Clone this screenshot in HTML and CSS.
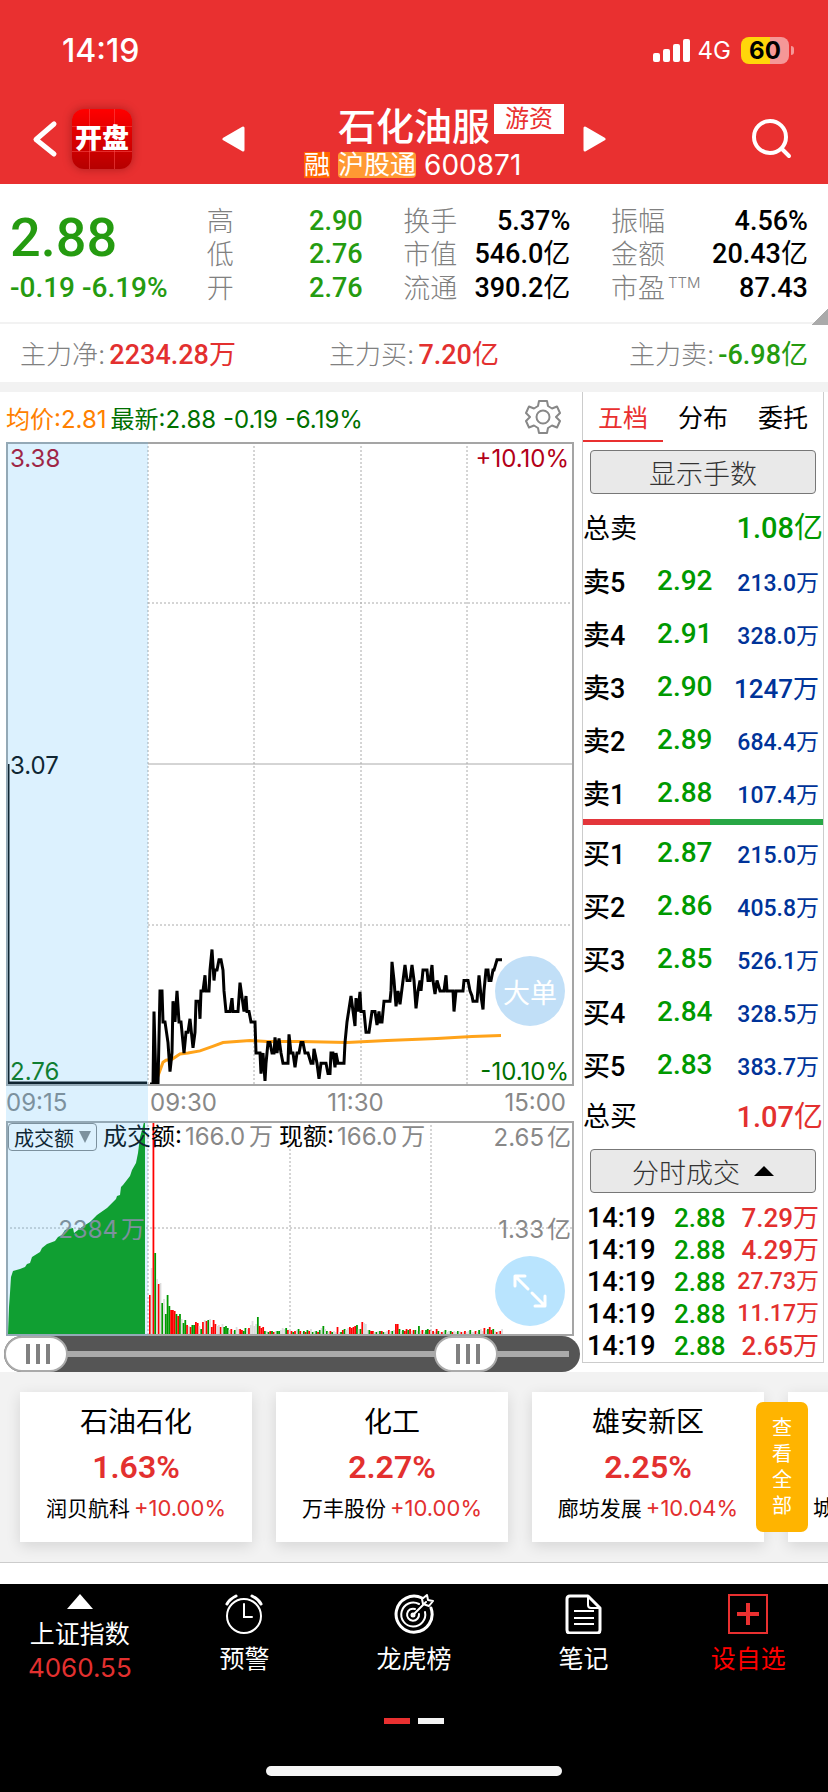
FILE: index.html
```html
<!DOCTYPE html>
<html lang="zh-CN">
<head>
    <title>石化油服 600871</title>
    <meta charset="UTF-8">
    <meta name="viewport" content="width=device-width, initial-scale=1">
    <link rel="stylesheet" href="styles.css">
</head>
<body>
    <header class="header">
        <div class="status-bar">
            <span class="clock">14:19</span>
            <div class="status-icons">
                <svg class="signal" viewBox="0 0 37 23" width="37" height="23" fill="#fff">
                    <rect x="0" y="14" width="7" height="9" rx="2"/>
                    <rect x="10" y="10" width="7" height="13" rx="2"/>
                    <rect x="20" y="5" width="7" height="18" rx="2"/>
                    <rect x="30" y="0" width="7" height="23" rx="2"/>
                </svg>
                <span class="network">4G</span>
                <span class="battery">60</span>
                <span class="battery-tip"></span>
            </div>
        </div>
        <div class="nav">
            <div class="nav-left">
                <button class="icon-btn" aria-label="返回">
                    <svg viewBox="0 0 26 38" width="26" height="38" fill="none" stroke="#fff" stroke-width="5" stroke-linecap="round" stroke-linejoin="round"><path d="M22 4 4 19.500 22 34"/></svg>
                </button>
                <a class="logo" href="#">开盘</a>
            </div>
            <button class="icon-btn" aria-label="上一只">
                <svg viewBox="0 0 24 26" width="24" height="26" fill="#fff" stroke="#fff" stroke-width="3" stroke-linejoin="round"><path d="M22 2v22L3 13z"/></svg>
            </button>
            <div class="title">
                <div class="title-main">
                    <h1>石化油服</h1>
                    <span class="tag">游资</span>
                </div>
                <div class="title-sub">
                    <span class="mark">融</span>
                    <span class="mark mark-hk">沪股通</span>
                    <span class="code">600871</span>
                </div>
            </div>
            <button class="icon-btn" aria-label="下一只">
                <svg viewBox="0 0 24 26" width="24" height="26" fill="#fff" stroke="#fff" stroke-width="3" stroke-linejoin="round"><path d="M2 2v22l19-11z"/></svg>
            </button>
            <div class="nav-right">
                <button class="icon-btn" aria-label="搜索">
                    <svg viewBox="0 0 40 40" width="40" height="40" fill="none" stroke="#fff" stroke-width="4" stroke-linecap="round"><circle cx="18" cy="18" r="16"/><path d="m30 30 7 7"/></svg>
                </button>
            </div>
        </div>
    </header>

    <section class="quote">
        <div class="quote-price">
            <strong>2.88</strong>
            <span>-0.19 -6.19%</span>
        </div>
        <dl class="stats down">
            <dt>高</dt><dd>2.90</dd>
            <dt>低</dt><dd>2.76</dd>
            <dt>开</dt><dd>2.76</dd>
        </dl>
        <dl class="stats">
            <dt>换手</dt><dd>5.37%</dd>
            <dt>市值</dt><dd>546.0<span class="unit">亿</span></dd>
            <dt>流通</dt><dd>390.2<span class="unit">亿</span></dd>
        </dl>
        <dl class="stats">
            <dt>振幅</dt><dd>4.56%</dd>
            <dt>金额</dt><dd>20.43<span class="unit">亿</span></dd>
            <dt>市盈<sup>TTM</sup></dt><dd>87.43</dd>
        </dl>
        <span class="corner"></span>
    </section>

    <section class="flow">
        <div>主力净:<b class="up">2234.28<span class="unit">万</span></b></div>
        <div>主力买:<b class="up">7.20<span class="unit">亿</span></b></div>
        <div>主力卖:<b class="down">-6.98<span class="unit">亿</span></b></div>
    </section>

    <main class="main">
        <div class="chart-col">
            <div class="chart-info">
                <span class="avg">均价:2.81</span>
                <span class="last">最新:2.88 -0.19 -6.19%</span>
                <button class="icon-btn gear" aria-label="设置">
                    <svg viewBox="0 0 36 36" width="36" height="36" fill="none" stroke="#888" stroke-width="2" stroke-linejoin="round">
                        <circle cx="18" cy="18" r="6.500"/>
                        <path d="M14 2h8l1 5 4 2.500 5-2 3 6.500-4 4 4 4-3 6.500-5-2-4 2.500-1 5h-8l-1-5-4-2.500-5 2L1 22l4-4-4-4 3-6.500 5 2L13 7z"/>
                    </svg>
                </button>
            </div>
            <div class="charts">
                <svg class="chart" viewBox="0 0 568 644">
                    <g class="grid">
                        <path d="M142 0v644M248 0v644M355 0v644M461 0v644M142 161h426M142 483h426"/>
                    </g>
                    <path class="mid" d="M142 322h426"/>
                    <polyline id="avgLine" class="avg-line"/>
                    <polyline id="priceLine" class="price-line"/>
                    <path class="pre-line" d="M2 322v319h139"/>
                    <rect class="frame" x="1" y="1" width="566" height="642"/>
                    <text class="t-up" x="4" y="25">3.38</text>
                    <text class="t-up" x="563" y="25" text-anchor="end">+10.10%</text>
                    <text x="4" y="332">3.07</text>
                    <text class="t-down" x="4" y="638">2.76</text>
                    <text class="t-down" x="563" y="638" text-anchor="end">-10.10%</text>
                </svg>
                <div class="times">
                    <span>09:15</span><span>09:30</span><span>11:30</span><span>15:00</span>
                </div>
                <svg class="chart" viewBox="0 0 568 215">
                    <g class="grid">
                        <path d="M142 0v215M284 0v215M425 0v215M0 107h568"/>
                    </g>
                    <polygon class="pre-volume" points="2,213 3,186 4,172 5,156 7,150 14,148 19,146 21,143 24,142 26,136 34,131 36,127 41,123 49,120 52,116 56,114 59,109 67,107 68,112 72,109 76,106 84,101 91,94 101,87 110,78 111,75 114,74 115,66 117,64 124,55 126,49 130,42 132,32 134,16 136,9 138,1 139,1 139,213"/>
                    <g id="volumes"></g>
                    <rect class="frame" x="1" y="1" width="566" height="213"/>
                    <text x="97" y="24">成交额:<tspan class="t-gray" dx="3">166.0</tspan><tspan class="t-gray" dx="4">万</tspan><tspan dx="6">现额:</tspan><tspan class="t-gray" dx="3">166.0</tspan><tspan class="t-gray" dx="4">万</tspan></text>
                    <text class="t-gray" x="565" y="25" text-anchor="end">2.65<tspan dx="3">亿</tspan></text>
                    <text class="t-gray" x="565" y="117" text-anchor="end">1.33<tspan dx="3">亿</tspan></text>
                    <text class="t-gray" x="139" y="117" text-anchor="end">2384<tspan dx="3">万</tspan></text>
                </svg>
                <button class="metric">成交额<i></i></button>
                <div class="pre-open"></div>
                <button class="float-btn big-order">大单</button>
                <button class="float-btn expand" aria-label="全屏">
                    <svg viewBox="0 0 34 34" width="34" height="34" fill="none" stroke="#fff" stroke-width="3" stroke-linecap="round" stroke-linejoin="round"><path d="M2 12V2h10M3 3l12 12M32 22v10H22M31 31 19 19"/></svg>
                </button>
            </div>
            <div class="slider">
                <div class="track"></div>
                <input type="range" min="0" max="100" value="0" aria-label="开始时间">
                <input type="range" min="0" max="100" value="84" aria-label="结束时间">
            </div>
        </div>

        <aside class="book">
            <nav class="tabs">
                <button class="active">五档</button>
                <button>分布</button>
                <button>委托</button>
            </nav>
            <button class="gray-btn">显示手数</button>
            <div class="total"><span>总卖</span><b>1.08<span class="unit">亿</span></b></div>
            <table class="levels">
                <tr><th>卖5</th><td>2.92</td><td>213.0<span class="unit">万</span></td></tr>
                <tr><th>卖4</th><td>2.91</td><td>328.0<span class="unit">万</span></td></tr>
                <tr><th>卖3</th><td>2.90</td><td class="short">1247<span class="unit">万</span></td></tr>
                <tr><th>卖2</th><td>2.89</td><td>684.4<span class="unit">万</span></td></tr>
                <tr><th>卖1</th><td>2.88</td><td>107.4<span class="unit">万</span></td></tr>
            </table>
            <div class="ratio"></div>
            <table class="levels">
                <tr><th>买1</th><td>2.87</td><td>215.0<span class="unit">万</span></td></tr>
                <tr><th>买2</th><td>2.86</td><td>405.8<span class="unit">万</span></td></tr>
                <tr><th>买3</th><td>2.85</td><td>526.1<span class="unit">万</span></td></tr>
                <tr><th>买4</th><td>2.84</td><td>328.5<span class="unit">万</span></td></tr>
                <tr><th>买5</th><td>2.83</td><td>383.7<span class="unit">万</span></td></tr>
            </table>
            <div class="total buy"><span>总买</span><b>1.07<span class="unit">亿</span></b></div>
            <button class="gray-btn">分时成交<svg viewBox="0 0 20 10" width="20" height="10"><path d="M10 0 20 10H0z"/></svg></button>
            <table class="ticks">
                <tr><td>14:19</td><td>2.88</td><td>7.29<span class="unit">万</span></td></tr>
                <tr><td>14:19</td><td>2.88</td><td>4.29<span class="unit">万</span></td></tr>
                <tr><td>14:19</td><td>2.88</td><td class="long">27.73<span class="unit">万</span></td></tr>
                <tr><td>14:19</td><td>2.88</td><td class="long">11.17<span class="unit">万</span></td></tr>
                <tr><td>14:19</td><td>2.88</td><td>2.65<span class="unit">万</span></td></tr>
            </table>
        </aside>
    </main>

    <section class="sectors">
        <a class="card" href="#">
            <h2>石油石化</h2>
            <strong>1.63%</strong>
            <p>润贝航科<span>+10.00%</span></p>
        </a>
        <a class="card" href="#">
            <h2>化工</h2>
            <strong>2.27%</strong>
            <p>万丰股份<span>+10.00%</span></p>
        </a>
        <a class="card" href="#">
            <h2>雄安新区</h2>
            <strong>2.25%</strong>
            <p>廊坊发展<span>+10.04%</span></p>
        </a>
        <a class="card card-next" href="#">
            <p>城</p>
        </a>
        <button class="view-all">查看全部</button>
    </section>

    <footer class="footer">
        <nav class="toolbar">
            <a class="index" href="#">
                <svg viewBox="0 0 26 15" width="26" height="15"><path d="M13 0 26 15H0z" fill="#fff"/></svg>
                <span>上证指数</span>
                <em>4060.55</em>
            </a>
            <a href="#">
                <svg viewBox="0 0 40 40" width="40" height="40" fill="none" stroke="#fff" stroke-width="2" stroke-linecap="round"><circle cx="20" cy="22" r="17"/><path d="M20 10v13h8"/><path d="M3 10C5 6 8 4 12 2M37 10C35 6 32 4 28 2" stroke-width="3"/></svg>
                <span>预警</span>
            </a>
            <a href="#">
                <svg viewBox="0 0 40 40" width="40" height="40" fill="none" stroke="#fff" stroke-width="2" stroke-linecap="round" stroke-linejoin="round"><path d="M28 4A18 18 0 1 0 37 14" stroke-width="3"/><path d="M25 10a12 12 0 1 0 6 8"/><path d="M21 15a6 6 0 1 0 4 5"/><path d="m18 22 14-14M29 10l-1-5 5-4 1 5 5 1-4 5z"/><circle cx="19" cy="21" r="1.500"/></svg>
                <span>龙虎榜</span>
            </a>
            <a href="#">
                <svg viewBox="0 0 40 40" width="40" height="40" fill="none" stroke="#fff" stroke-width="3" stroke-linejoin="round"><path d="M6 2h18l12 12v22q0 3-3 3H6q-3 0-3-3V5q0-3 3-3z"/><path d="M24 3v8q0 3 3 3h8" stroke-width="2"/><path d="M10 17h20M10 24h20M10 30h20" stroke-width="2"/></svg>
                <span>笔记</span>
            </a>
            <a class="add" href="#">
                <svg viewBox="0 0 40 40" width="40" height="40" fill="none" stroke="#e93030"><path d="M1 1h38v38H1z" stroke-width="2"/><path d="M20 9v22M9 20h22" stroke-width="4"/></svg>
                <span>设自选</span>
            </a>
        </nav>
        <div class="pager"><i class="on"></i><i></i></div>
        <div class="home-bar"></div>
    </footer>
    <script src="chart.js"></script>
</body>
</html>
```

FILE: styles.css
```css
* {
    box-sizing: border-box;
}
body {
    margin: 0;
    font-family: Inter, "Noto Sans CJK SC", sans-serif;
    font-size: 24px;
    color: #000;
    background: #fff;
    overflow-x: hidden;
}
button {
    margin: 0;
    padding: 0;
    border: none;
    background: none;
    color: inherit;
    font: inherit;
    cursor: pointer;
}
a {
    color: inherit;
    text-decoration: none;
}
svg {
    display: block;
}
table {
    border-collapse: collapse;
}
h1, h2, p, dl, dd {
    margin: 0;
}
.up {
    color: #e3302f;
}
.down {
    color: #259b10;
}
.unit {
    font-weight: 400;
}
.icon-btn {
    display: flex;
}

/* header */
.header {
    background: #e93030;
    color: #fff;
    height: 184px;
}
.status-bar {
    display: flex;
    justify-content: space-between;
    align-items: center;
    height: 100px;
    padding: 0 34px 0 62px;
}
.clock {
    font-size: 32px;
    font-weight: 500;
}
.status-icons {
    display: flex;
    align-items: center;
}
.network {
    margin: 0 10px 0 8px;
}
.battery {
    width: 48px;
    line-height: 27px;
    border-radius: 8px;
    background: linear-gradient(90deg, #ffd60a 60%, #f59797 60%);
    color: #000;
    font-weight: 700;
    text-align: center;
}
.battery-tip {
    width: 3px;
    height: 9px;
    margin-left: 2px;
    border-radius: 0 4px 4px 0;
    background: #f59797;
}
.nav {
    display: grid;
    grid-template-columns: 1fr auto 300px auto 1fr;
    align-items: center;
    column-gap: 19px;
    height: 78px;
}
.nav-left {
    display: flex;
    align-items: center;
    gap: 14px;
    padding-left: 32px;
}
.nav-right {
    display: flex;
    justify-content: flex-end;
    padding-right: 36px;
}
.logo {
    width: 60px;
    height: 60px;
    border-radius: 12px;
    background:
        linear-gradient(90deg, transparent 17px, #ff555580 17px, #ff555580 18px, transparent 18px, transparent 42px, #ff555580 42px, #ff555580 43px, transparent 43px),
        linear-gradient(transparent 17px, #ff555580 17px, #ff555580 18px, transparent 18px, transparent 42px, #ff555580 42px, #ff555580 43px, transparent 43px),
        linear-gradient(#ff0000, #b50000);
    box-shadow: 0 0 10px rgba(80, 0, 0, 0.4);
    font-size: 27px;
    font-weight: 900;
    line-height: 60px;
    text-align: center;
}
.title {
    padding-top: 4px;
}
.title-main {
    display: flex;
    justify-content: flex-end;
    gap: 4px;
}
.title-main h1 {
    font-size: 38px;
    font-weight: 500;
    line-height: 44px;
}
.tag {
    width: 70px;
    height: 30px;
    background: #fff;
    color: #e93030;
    line-height: 30px;
    text-align: center;
}
.title-sub {
    display: flex;
    align-items: center;
    gap: 8px;
    margin-top: 4px;
    padding-left: 40px;
    font-size: 26px;
    line-height: 26px;
}
.code {
    font-size: 28px;
}
.mark {
    background: #ff6600;
}
.mark-hk {
    border-radius: 4px;
    background: #ff9933;
}

/* quote */
.quote {
    position: relative;
    display: grid;
    grid-template-columns: 156px 156px 167px 197px;
    justify-content: space-between;
    padding: 21px 20px 17px 10px;
    border-bottom: 2px solid #f2f2f2;
}
.quote-price {
    color: #259b10;
    font-family: Roboto, sans-serif;
    font-size: 28px;
    font-weight: 500;
    line-height: 34px;
    white-space: nowrap;
}
.quote-price strong {
    display: block;
    font-size: 54px;
    font-weight: 500;
    line-height: 66px;
}
.stats {
    display: grid;
    grid-template-columns: auto 1fr;
    font-size: 27px;
    line-height: 33px;
}
.stats dt {
    height: 33px;
    color: #808080;
    font-weight: 300;
}
.stats sup {
    font-size: 15px;
    line-height: 15px;
    margin-left: 3px;
}
.stats dd {
    font-family: Roboto, "Noto Sans CJK SC", sans-serif;
    font-weight: 500;
    text-align: right;
    white-space: nowrap;
}
.corner {
    position: absolute;
    right: 0;
    bottom: -3px;
    width: 16px;
    height: 16px;
    background: linear-gradient(135deg, transparent 50%, #aaa 50%);
}
.flow {
    display: grid;
    grid-template-columns: 1fr auto 1fr;
    padding: 4px 20px 0;
    border-bottom: 10px solid #f2f2f2;
    color: #808080;
    font-size: 26px;
    font-weight: 300;
    line-height: 54px;
}
.flow div:last-child {
    text-align: right;
}
.flow b {
    margin-left: 4px;
    font-family: Roboto, "Noto Sans CJK SC", sans-serif;
    font-size: 27px;
    font-weight: 500;
}

/* charts */
.main {
    display: grid;
    grid-template-columns: minmax(0, 1fr) 242px;
    gap: 2px;
    padding-right: 4px;
}
.chart-info {
    display: flex;
    align-items: center;
    gap: 4px;
    height: 50px;
    padding-left: 6px;
}
.avg {
    color: #ff8000;
}
.last {
    color: #007000;
}
.gear {
    margin-left: auto;
    margin-right: 19px;
}
.charts {
    position: relative;
    margin: 0 6px;
}
.chart {
    width: 100%;
    height: auto;
    font-size: 24px;
}
.grid {
    fill: none;
    stroke: #aaa;
    stroke-width: 1;
    stroke-dasharray: 2 2;
}
.mid {
    stroke: #aaa;
}
.frame {
    fill: none;
    stroke: #a5a5a5;
    stroke-width: 2;
}
.price-line, .pre-line {
    fill: none;
    stroke: #000;
    stroke-width: 3;
}
.avg-line {
    fill: none;
    stroke: #ffa31a;
    stroke-width: 3;
}
.pre-volume {
    fill: #009900;
}
.t-up {
    fill: #b30018;
}
.t-down {
    fill: #007000;
}
.t-gray {
    fill: #888;
}
.times {
    display: grid;
    grid-template-columns: 144px 1fr 1fr 1fr;
    height: 35px;
    line-height: 34px;
    color: #888;
}
.times span:nth-child(3) {
    padding-left: 36px;
}
.times span:last-child {
    text-align: right;
    padding-right: 8px;
}
.metric {
    position: absolute;
    left: 2px;
    bottom: 185px;
    display: flex;
    align-items: center;
    gap: 5px;
    height: 28px;
    padding: 0 5px;
    border: 1px solid #888;
    border-radius: 4px;
    font-size: 20px;
}
.metric i {
    border: 6px solid transparent;
    border-top: 12px solid #888;
    border-bottom: 0;
}
/* 竞价时段遮罩 */
.pre-open {
    position: absolute;
    inset: 0 75% 0 0;
    background: rgba(78, 186, 250, 0.2);
    pointer-events: none;
}
.float-btn {
    position: absolute;
    right: 9px;
    display: flex;
    align-items: center;
    justify-content: center;
    width: 70px;
    height: 70px;
    border-radius: 50%;
    color: #fff;
    font-size: 27px;
}
.big-order {
    bottom: 310px;
    background: #c1dff7;
}
.expand {
    bottom: 10px;
    background: #b9e4fe;
}
.slider {
    position: relative;
    height: 36px;
    margin-left: 4px;
    border-radius: 18px;
    background: #555;
}
.track {
    position: absolute;
    inset: 15px 11px 15px 30px;
    background: #aaa;
}
.slider input {
    appearance: none;
    position: absolute;
    inset: 0;
    width: 100%;
    height: 36px;
    margin: 0;
    background: none;
    pointer-events: none;
}
.slider input::-webkit-slider-thumb {
    appearance: none;
    width: 64px;
    height: 36px;
    border: 2px solid #aaa;
    border-radius: 18px;
    background:
        linear-gradient(#808080, #808080) 20px 6px / 4px 20px no-repeat,
        linear-gradient(#808080, #808080) 30px 6px / 4px 20px no-repeat,
        linear-gradient(#808080, #808080) 40px 6px / 4px 20px no-repeat,
        #fff;
    pointer-events: auto;
}

/* order book */
.book {
    height: 971px;
    border: 1px solid #ccc;
    border-top: none;
}
.tabs {
    display: grid;
    grid-template-columns: repeat(3, 1fr);
    height: 50px;
}
.tabs button {
    border-bottom: 2px solid transparent;
    font-size: 25px;
}
.tabs .active {
    border-color: #e93030;
    color: #e93030;
}
.gray-btn {
    display: flex;
    align-items: center;
    justify-content: center;
    gap: 14px;
    width: calc(100% - 14px);
    height: 44px;
    margin: 8px 7px 0;
    border: 1px solid #777;
    border-radius: 4px;
    background: #e9e9e9;
    color: #333;
    font-size: 27px;
    font-weight: 300;
}
.total {
    display: flex;
    justify-content: space-between;
    height: 60px;
    padding-top: 8px;
    font-size: 27px;
    line-height: 53px;
}
.total b {
    color: #009900;
    font-family: Roboto, "Noto Sans CJK SC", sans-serif;
    font-size: 29px;
    font-weight: 500;
}
.total.buy {
    height: 50px;
    padding: 2px 0 0;
    line-height: 48px;
}
.total.buy b {
    color: #e3302f;
}
.levels, .ticks {
    width: 100%;
    font-family: Roboto, "Noto Sans CJK SC", sans-serif;
    font-weight: 500;
}
.levels tr {
    height: 53px;
}
.levels th, .levels td, .ticks td {
    padding: 0;
    text-align: left;
    white-space: nowrap;
}
.levels th {
    width: 74px;
    font-size: 27px;
    font-weight: 500;
}
.levels td {
    color: #009900;
    font-size: 28px;
}
.levels td:last-child {
    padding-right: 4px;
    color: #003399;
    font-size: 23px;
    text-align: right;
}
.levels .short:last-child {
    font-size: 26px;
}
.ratio {
    height: 6px;
    background: linear-gradient(90deg, #e3363b 53%, #28a745 53%);
}
.ratio + .levels {
    margin-top: 1px;
}
.ticks {
    margin-top: 9px;
    font-size: 27px;
    line-height: 32px;
}
.ticks td:first-child {
    width: 91px;
    padding-left: 4px;
}
.ticks td:nth-child(2) {
    color: #009900;
    font-size: 26px;
}
.ticks td:last-child {
    padding-right: 4px;
    color: #e3302f;
    font-size: 26px;
    text-align: right;
}
.ticks .long:last-child {
    font-size: 23px;
}

/* sectors */
.sectors {
    position: relative;
    display: flex;
    gap: 24px;
    padding: 20px;
    border-bottom: 1px solid #ccc;
    background: #f2f2f2;
    overflow: hidden;
}
.card {
    flex: 0 0 232px;
    height: 150px;
    padding-top: 10px;
    background: #fff;
    box-shadow: 0 4px 14px rgba(0, 0, 0, 0.12);
    text-align: center;
}
.card h2 {
    font-size: 28px;
    font-weight: 400;
    line-height: 40px;
}
.card strong {
    display: block;
    color: #e3302f;
    font-family: Roboto, sans-serif;
    font-size: 32px;
    font-weight: 600;
    line-height: 50px;
}
.card p {
    font-size: 21px;
    line-height: 32px;
    white-space: nowrap;
}
.card p span {
    margin-left: 4px;
    color: #e3302f;
    font-size: 22px;
}
.card-next {
    padding: 100px 0 0 25px;
    text-align: left;
}
.view-all {
    position: absolute;
    top: 30px;
    right: 20px;
    width: 52px;
    height: 130px;
    padding: 0 16px;
    border-radius: 7px;
    background: #ffb400;
    color: #fff;
    font-size: 20px;
    line-height: 26px;
}

/* footer */
.footer {
    height: 208px;
    margin-top: 21px;
    background: #000;
    color: #fff;
}
.toolbar {
    display: grid;
    grid-template-columns: 16fr 17fr 17fr 17fr 16fr;
    height: 134px;
    padding-top: 10px;
}
.toolbar a {
    display: flex;
    flex-direction: column;
    align-items: center;
    gap: 8px;
    font-size: 25px;
    line-height: 34px;
}
.toolbar .index {
    gap: 0;
}
.index svg {
    margin-bottom: 8px;
}
.index em {
    color: #e3302f;
    font-size: 26px;
    font-style: normal;
}
.toolbar .add {
    color: #ff0000;
}
.pager {
    display: flex;
    justify-content: center;
    gap: 8px;
}
.pager i {
    width: 26px;
    height: 6px;
    background: #f3f3f3;
}
.pager .on {
    background: #e93030;
}
.home-bar {
    width: 296px;
    height: 10px;
    margin: 42px auto 0;
    border-radius: 5px;
    background: #f5f5f5;
}
```

FILE: chart.js
```javascript
// 分时价格: [x, 相对跌停价的价位]
const prices = [
    [144, 0], [147, 0], [148, 7], [150, 0], [152, 0], [154, 9], [156, 9], [157, 6], [159, 6], [162, 4],
    [164, 1.2], [166, 3], [167, 8], [169, 6], [171, 9], [173, 6], [175, 6], [178, 3], [180, 5], [182, 5],
    [184, 6.3], [187, 3.5], [189, 5], [190, 8], [193, 8], [194, 6.3], [195, 9], [197, 9], [199, 10.5], [200, 9],
    [203, 9], [204, 11], [206, 13], [208, 10], [209, 11], [211, 11], [213, 12], [215, 12], [217, 11], [218, 9],
    [220, 7], [224, 7], [226, 8.3], [227, 7], [232, 7], [234, 9.8], [238, 7], [240, 8.5], [241, 7], [243, 7],
    [245, 6], [249, 6], [250, 3], [254, 3], [255, 1], [257, 3], [259, 0.3], [260, 2], [262, 4], [264, 4],
    [266, 3], [268, 3], [269, 4.5], [271, 3], [273, 4.4], [275, 3], [277, 2], [282, 2], [283, 4.8], [285, 3],
    [287, 3], [289, 1.6], [291, 3], [293, 3], [295, 4], [297, 4], [299, 3], [302, 3], [305, 2], [307, 2],
    [308, 3.4], [311, 2], [313, 0.5], [315, 2], [320, 2], [322, 1], [324, 1], [325, 3], [327, 3], [329, 1.6],
    [330, 3], [332, 2], [338, 2], [339, 4], [341, 6], [345, 8.5], [349, 5.6], [350, 8.3], [352, 7], [354, 8.9],
    [355, 7], [358, 7], [360, 5], [363, 5], [366, 7], [369, 7], [371, 5.7], [373, 7], [374, 6], [376, 6],
    [378, 8], [384, 8], [385, 9], [386, 11.8], [388, 10], [390, 7.5], [392, 9], [394, 7.7], [399, 11.5], [401, 10],
    [404, 10], [406, 11.5], [408, 10], [410, 7.3], [412, 9], [414, 10], [415, 9], [417, 11], [421, 11], [422, 10],
    [424, 10], [426, 11.5], [427, 10], [429, 8.7], [431, 10], [434, 9], [438, 9], [440, 10.5], [441, 9], [447, 9],
    [448, 7], [450, 9], [457, 9], [458, 10], [462, 10], [464, 9], [466, 8.5], [467, 8], [471, 8], [473, 10.5],
    [475, 8.5], [477, 7.2], [478, 9], [480, 11], [482, 11], [483, 10], [485, 10], [487, 11], [488, 11], [491, 12],
    [496, 12]
];

// 均价线
const averages = [
    [149, 0], [154, 1.3], [157, 2.1], [160, 2.3], [166, 2.4], [174, 2.9], [182, 3], [194, 3.2], [206, 3.6],
    [217, 4], [244, 4.2], [261, 4.1], [294, 4.1], [341, 4], [381, 4.2], [431, 4.4], [466, 4.6], [495, 4.7]
];

// 每分钟成交额: r 涨, g 跌, w 平
const volumes = 'r39 w66 r212 g81 w55 r50 w51 g31 w35 g20 g39 g28 r24 r24 r23 g20 r18 g20 w15 g11 g14 ' +
    'r9 w8 r7 g9 g9 r12 r11 w8 g5 r12 w14 r13 g14 w15 r7 r14 r10 w8 w9 r7 w10 g7 g8 g6 w4 r5 w3 g4 w7 w5 ' +
    'r5 r4 g3 g6 w5 r6 w9 w13 w8 w10 g17 r8 r6 r7 g3 w3 g2 r3 g3 r2 w3 g3 g3 w4 w6 w5 g6 r4 w5 r3 g2 r3 ' +
    'w4 g5 r3 w2 g3 r2 g4 r3 w5 g2 w3 g3 r2 g4 w6 g8 w5 g3 w2 r3 g2 w3 w2 r7 w2 g2 r4 g5 w4 w6 r7 r6 ' +
    'r7 r8 g9 w5 g5 r12 w11 w10 w4 g4 r3 r3 w2 g2 w3 g3 r3 g2 w2 w3 r4 w3 g3 w4 r10 r10 g5 w3 g4 r3 r5 ' +
    'g4 r5 w3 r4 g4 w3 g8 w3 r4 w2 g4 g5 r4 w3 r3 w2 r5 g3 w2 r2 w3 g4 w2 w3 g3 r2 w3 w2 g3 w3 r2 w2 ' +
    'r3 w2 w3 g4 w2 w2 r3 w2 g4 w5 w3 r6 w4 g5 r7 r4 g5 w3 r2 w3 r3 w5';

const colors = { r: '#ff0000', g: '#009900', w: '#dddddd' };

function toPoints(data) {
    return data.map(([x, level]) => `${x},${(642 - level * 10.35).toFixed(1)}`).join(' ');
}

document.getElementById('priceLine').setAttribute('points', toPoints(prices));
document.getElementById('avgLine').setAttribute('points', toPoints(averages));

const step = 1.77;
document.getElementById('volumes').innerHTML = volumes.split(' ').slice(0, 200).map((item, i) => {
    const height = Number(item.slice(1));
    return `<rect x="${(143 + i * step).toFixed(2)}" y="${213 - height}" width="${step}" height="${height}" fill="${colors[item[0]]}"/>`;
}).join('');
```
